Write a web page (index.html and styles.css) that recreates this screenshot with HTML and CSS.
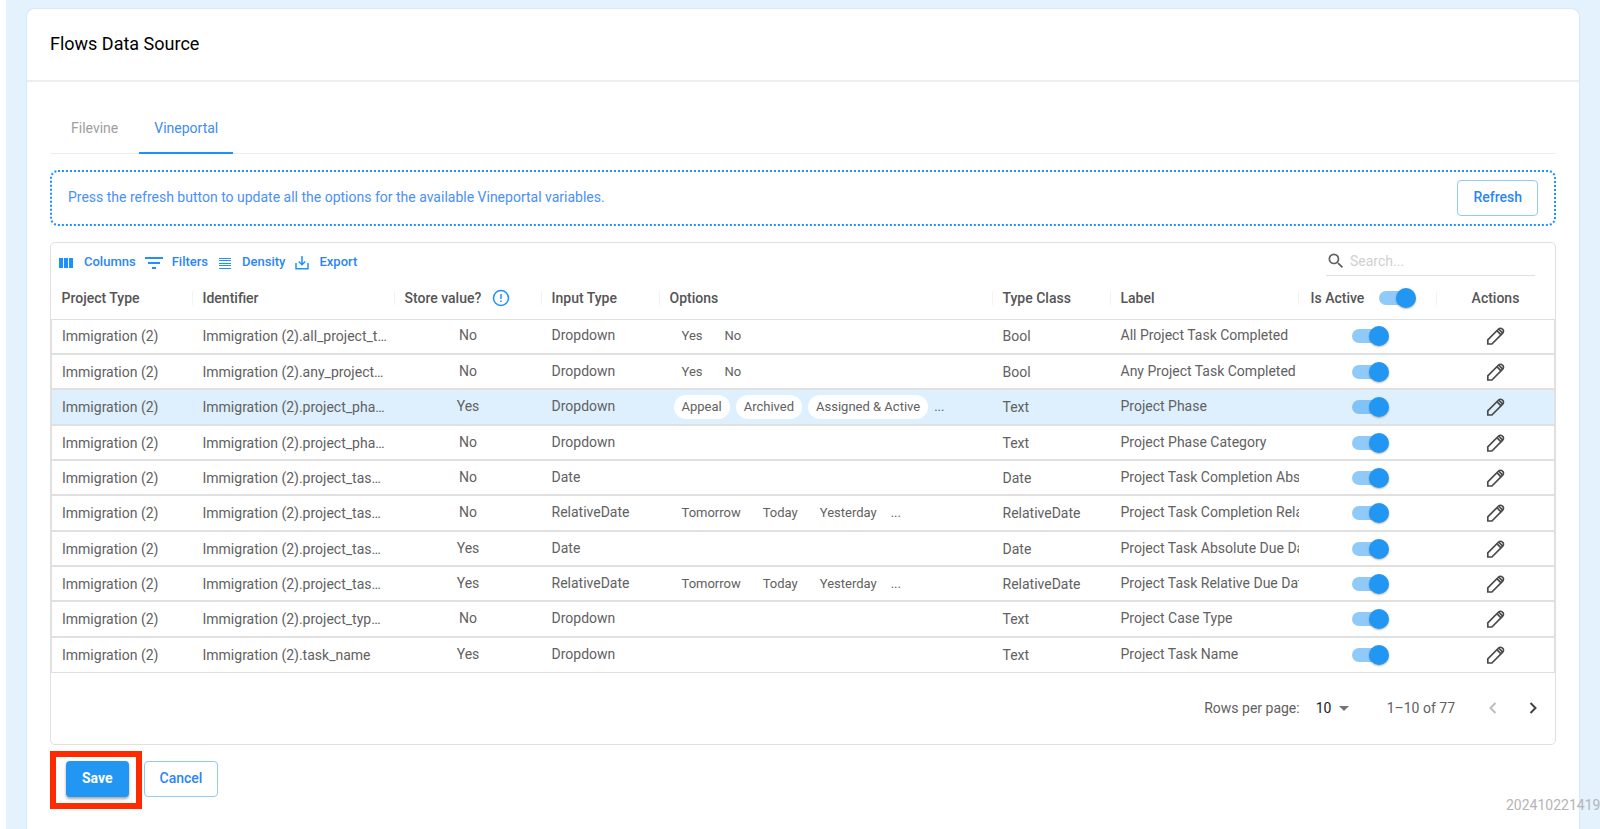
FILE: index.html
```html
<!DOCTYPE html>
<html lang="en">

<head>
    <meta charset="UTF-8">
    <meta name="viewport" content="width=device-width, initial-scale=1.0">
    <title>Flows Data Source</title>
    <link rel="stylesheet" href="styles.css">
</head>

<body>
    <div class="page">
        <main class="card">
            <header class="card-header">
                <h1>Flows Data Source</h1>
            </header>

            <div class="card-body">
                <div class="tabs" role="tablist">
                    <button type="button" class="tab" role="tab">Filevine</button>
                    <button type="button" class="tab active" role="tab" aria-selected="true">Vineportal</button>
                </div>

                <div class="notice">
                    <p>Press the refresh button to update all the options for the available Vineportal variables.</p>
                    <button type="button" class="btn btn-outline">Refresh</button>
                </div>

                <section class="grid">
                    <div class="toolbar">
                        <div class="toolbar-actions">
                            <button type="button" class="tool">
                                <svg width="20" height="20" viewBox="0 0 20 20" fill="currentColor"><path d="M3 6h4v10H3zM8 6h4v10H8zM13 6h4v10h-4z"/></svg>
                                Columns
                            </button>
                            <button type="button" class="tool">
                                <svg width="20" height="20" viewBox="0 0 20 20" fill="currentColor"><path d="M1 5h18v2H1zM4 10h12v2H4zM8 15h4v2H8z"/></svg>
                                Filters
                            </button>
                            <button type="button" class="tool">
                                <svg width="18" height="20" viewBox="1 0 18 20" fill="currentColor"><path d="M4 6h12v1H4zM4 8h12v1H4zM4 11h12v1H4zM4 13h12v1H4zM4 16h12v1H4z"/></svg>
                                Density
                            </button>
                            <button type="button" class="tool">
                                <svg width="18" height="20" viewBox="1 0 18 20" fill="none" stroke="currentColor" stroke-width="1.5"><path d="M4 11v5.700h12V11M10 4v8.500M6.800 9.500l3.200 3.200 3.200-3.200"/></svg>
                                Export
                            </button>
                        </div>
                        <label class="search">
                            <svg width="20" height="20" viewBox="0 0 24 24" fill="currentColor"><path d="M15.500 14h-.790l-.280-.270A6.471 6.471 0 0 0 16 9.500 6.500 6.500 0 1 0 9.500 16c1.610 0 3.090-.590 4.230-1.570l.270.280v.790l5 4.990L20.490 19l-4.990-5zm-6 0C7.010 14 5 11.990 5 9.500S7.010 5 9.500 5 14 7.010 14 9.500 11.990 14 9.500 14z"/></svg>
                            <input type="search" placeholder="Search..." aria-label="Search">
                        </label>
                    </div>

                    <table id="variablesTable">
                        <colgroup>
                            <col class="col-project">
                            <col class="col-identifier">
                            <col class="col-store">
                            <col class="col-input">
                            <col class="col-options">
                            <col class="col-class">
                            <col class="col-label">
                            <col class="col-active">
                            <col class="col-actions">
                        </colgroup>
                        <thead>
                            <tr>
                                <th>Project Type</th>
                                <th>Identifier</th>
                                <th>
                                    <div class="head-group">
                                        Store value?
                                        <svg width="18" height="18" viewBox="0 0 18 18" fill="none" stroke="#1e90ff" stroke-width="1.500"><circle cx="9" cy="9" r="7.500"/><path d="M9 5v5M9 11.500v1.500"/></svg>
                                    </div>
                                </th>
                                <th>Input Type</th>
                                <th>Options</th>
                                <th>Type Class</th>
                                <th>Label</th>
                                <th>
                                    <div class="head-group head-active">
                                        <label for="allActive">Is Active</label>
                                        <input type="checkbox" class="switch" id="allActive" checked>
                                    </div>
                                </th>
                                <th class="center">Actions</th>
                            </tr>
                        </thead>
                        <tbody>
                        </tbody>
                    </table>

                    <footer class="pagination">
                        <label for="pageSize">Rows per page:</label>
                        <div class="page-size">
                            <select id="pageSize">
                                <option>10</option>
                                <option>25</option>
                                <option>50</option>
                            </select>
                            <svg width="10" height="5" viewBox="0 0 10 5" fill="#757575"><path d="M0 0h10L5 5z"/></svg>
                        </div>
                        <span class="range">1–10 of 77</span>
                        <button type="button" class="page-btn" aria-label="Previous page" disabled>
                            <svg width="24" height="24" viewBox="0 0 24 24" fill="none" stroke="currentColor" stroke-width="2"><path d="M14.500 7l-5 5 5 5"/></svg>
                        </button>
                        <button type="button" class="page-btn" aria-label="Next page">
                            <svg width="24" height="24" viewBox="0 0 24 24" fill="none" stroke="currentColor" stroke-width="2"><path d="M9.500 7l5 5-5 5"/></svg>
                        </button>
                    </footer>
                </section>

                <div class="form-actions">
                    <div class="highlight">
                        <button type="button" class="btn btn-primary">Save</button>
                    </div>
                    <button type="button" class="btn btn-outline">Cancel</button>
                </div>
            </div>
        </main>
        <span class="version">202410221419</span>
    </div>

    <script src="script.js"></script>
</body>

</html>
```

FILE: styles.css
```css
* {
    box-sizing: border-box;
}

body {
    margin: 0;
    font-family: Roboto, "Liberation Sans", sans-serif;
    font-size: 14px;
    line-height: 20px;
    color: #616161;
    background-color: #fff;
}

button,
input,
select {
    font: inherit;
    color: inherit;
}

button {
    background: none;
    border: none;
    padding: 0;
    cursor: pointer;
}

svg {
    display: block;
    flex: none;
}

.page {
    position: relative;
    display: flex;
    height: 100vh;
    margin-left: 6px;
    padding: 9px 21px 0;
    background-color: #e3f2fd;
    overflow: hidden;
}

.card {
    flex: 1;
    min-width: 0;
    background: #fff;
    border-radius: 8px 8px 0 0;
    box-shadow: 0 0 1px 1px #d3e9fc;
}

.card-header {
    padding: 23px 23px 24px;
    border-bottom: 2px solid #eee;
}

.card-header h1 {
    margin: 0;
    font-size: 18px;
    font-weight: 400;
    line-height: 24px;
    color: #000;
}

.card-body {
    padding: 23px;
}

/* tabs */

.tabs {
    display: flex;
    border-bottom: 1px solid #eee;
}

.tab {
    height: 49px;
    padding: 0 15px 1px;
    margin-bottom: -1px;
    border-bottom: 2px solid transparent;
    color: #9e9e9e;
}

.tab:first-child {
    padding: 0 21px 1px;
}

.tab.active {
    color: #3d8bf5;
    border-bottom-color: #1e90ff;
}

/* refresh notice */

.notice {
    display: flex;
    align-items: center;
    justify-content: space-between;
    height: 56px;
    margin-top: 16px;
    padding: 0 16px;
    border: 2px dotted #1e90ff;
    border-radius: 8px;
}

.notice p {
    margin: 0;
    padding-bottom: 2px;
    color: #4a90f7;
}

.btn {
    height: 36px;
    padding: 0 15px 2px;
    border: 1px solid transparent;
    border-radius: 4px;
    font-weight: 500;
}

.btn-outline {
    border-color: #90caf9;
    color: #2b86f5;
}

.btn-primary {
    background: #2196f3;
    color: #fff;
    font-weight: 700;
    box-shadow: 0 2px 3px rgba(0, 0, 0, 0.35);
}

/* data grid */

.grid {
    margin-top: 16px;
    border: 1px solid #e0e0e0;
    border-radius: 5px;
}

.toolbar {
    display: flex;
    justify-content: space-between;
    padding: 3px 20px 0 5px;
}

.toolbar-actions {
    display: flex;
    align-items: center;
    gap: 8px;
    height: 32px;
}

.tool {
    display: flex;
    align-items: center;
    gap: 8px;
    font-size: 13px;
    font-weight: 500;
    color: #2b86f5;
}

.tool svg {
    color: #1e90ff;
}

.search {
    display: flex;
    align-items: center;
    gap: 4px;
    width: 209px;
    height: 30px;
    border-bottom: 1px solid #e0e0e0;
}

.search input {
    width: 100%;
    min-width: 0;
    padding: 0;
    border: none;
    outline: none;
    background: none;
}

.search input::placeholder {
    color: #d0d0d0;
}

table {
    width: 100%;
    table-layout: fixed;
    border-collapse: collapse;
}

.col-project {
    width: 141px;
}

.col-identifier {
    width: 202px;
}

.col-store {
    width: 147px;
}

.col-input,
.col-class,
.col-actions {
    width: 118px;
}

.col-label {
    width: 188px;
}

.col-active {
    width: 138px;
}

th,
td {
    padding: 0 10px;
    text-align: left;
    white-space: nowrap;
    overflow: hidden;
}

th {
    position: relative;
    height: 41px;
    padding-bottom: 1px;
    font-weight: 500;
    color: #555;
}

th:not(:last-child)::after {
    content: "";
    position: absolute;
    top: 13px;
    right: 0;
    width: 1px;
    height: 14px;
    background: #f3f3f3;
}

tbody tr {
    height: 35px;
    border: 2px solid #e0e0e0;
    border-width: 2px 1px;
}

tbody tr:nth-child(3n) {
    height: 36px;
}

tbody tr:first-child {
    border-top-width: 1px;
}

tbody tr:last-child {
    border-bottom-width: 1px;
}

tbody tr.selected {
    background: #def0fe;
}

.raised {
    padding-bottom: 2px;
}

.label-cell {
    padding-right: 0;
}

.center {
    text-align: center;
}

.active-cell {
    padding-left: 16px;
}

.head-group {
    display: flex;
    align-items: center;
    gap: 11px;
}

.head-active {
    gap: 15px;
    padding-left: 2px;
}

.chips {
    display: flex;
    align-items: center;
    gap: 6px;
    padding-left: 4px;
}

.chip {
    height: 24px;
    padding: 0 8px;
    border-radius: 12px;
    background: #fff;
    font-size: 13px;
    line-height: 24px;
}

.more {
    font-size: 13px;
}

.switch {
    appearance: none;
    position: relative;
    display: block;
    width: 37px;
    height: 20px;
    margin: 0;
    cursor: pointer;
}

.active-cell .switch {
    margin: 0 auto;
}

.switch::before {
    content: "";
    position: absolute;
    top: 3px;
    left: 0;
    width: 34px;
    height: 14px;
    border-radius: 7px;
    background: rgba(33, 150, 243, 0.5);
}

.switch::after {
    content: "";
    position: absolute;
    top: 0;
    right: 0;
    width: 20px;
    height: 20px;
    border-radius: 50%;
    background: #2196f3;
    box-shadow: 0 1px 2px rgba(0, 0, 0, 0.3);
}

.edit {
    display: block;
    margin: 0 auto;
    color: #4a4a4a;
}

.pagination {
    display: flex;
    align-items: center;
    justify-content: flex-end;
    height: 71px;
    padding-right: 10px;
}

.page-size {
    display: flex;
    align-items: center;
    gap: 7px;
    margin: 0 38px 0 16px;
}

.page-size select {
    appearance: none;
    padding: 0;
    border: none;
    background: none;
    color: #212121;
}

.range {
    margin-right: 26px;
}

.page-btn {
    margin-right: 16px;
    color: #424242;
}

.page-btn:last-child {
    margin-right: 0;
}

.page-btn:disabled {
    color: #bdbdbd;
}

/* bottom buttons */

.form-actions {
    display: flex;
    align-items: baseline;
    gap: 2px;
    margin-top: 6px;
}

.highlight {
    padding: 4px 7px 6px 10px;
    border: 6px solid #ff2a00;
}

.highlight .btn {
    display: block;
}

.version {
    position: absolute;
    left: calc(100% - 94px);
    bottom: 14px;
    color: #b5b5b5;
    white-space: nowrap;
}
```

FILE: script.js
```js
const variables = [
    { id: 'all_project_t…', store: 'No', input: 'Dropdown', options: ['Yes', 'No'], type: 'Bool', label: 'All Project Task Completed' },
    { id: 'any_project…', store: 'No', input: 'Dropdown', options: ['Yes', 'No'], type: 'Bool', label: 'Any Project Task Completed' },
    { id: 'project_pha…', store: 'Yes', input: 'Dropdown', options: ['Appeal', 'Archived', 'Assigned & Active'], more: true, type: 'Text', label: 'Project Phase', selected: true },
    { id: 'project_pha…', store: 'No', input: 'Dropdown', options: [], type: 'Text', label: 'Project Phase Category' },
    { id: 'project_tas…', store: 'No', input: 'Date', options: [], type: 'Date', label: 'Project Task Completion Absolute' },
    { id: 'project_tas…', store: 'No', input: 'RelativeDate', options: ['Tomorrow', 'Today', 'Yesterday'], more: true, type: 'RelativeDate', label: 'Project Task Completion Relative' },
    { id: 'project_tas…', store: 'Yes', input: 'Date', options: [], type: 'Date', label: 'Project Task Absolute Due Date' },
    { id: 'project_tas…', store: 'Yes', input: 'RelativeDate', options: ['Tomorrow', 'Today', 'Yesterday'], more: true, type: 'RelativeDate', label: 'Project Task Relative Due Date' },
    { id: 'project_typ…', store: 'No', input: 'Dropdown', options: [], type: 'Text', label: 'Project Case Type' },
    { id: 'task_name', store: 'Yes', input: 'Dropdown', options: [], type: 'Text', label: 'Project Task Name' }
];

const pencil = `
    <svg width="20" height="20" viewBox="0 0 20 20" fill="none" stroke="currentColor" stroke-width="1.7" stroke-linejoin="round">
        <path d="M2.800 18v-4.200L13.600 3a2.600 2.600 0 0 1 3.700 0l.400.400a2.600 2.600 0 0 1 0 3.700L6.900 18z"/>
        <path d="M11.900 4.700l4.100 4.100M13.600 3l4.100 4.100"/>
    </svg>`;

const tableBody = document.querySelector('#variablesTable tbody');

variables.forEach(item => {
    const chips = item.options.map(option => `<span class="chip">${option.replace('&', '&amp;')}</span>`).join('');
    const more = item.more ? '<span class="more">...</span>' : '';
    const row = document.createElement('tr');
    if (item.selected) {
        row.className = 'selected';
    }
    row.innerHTML = `
        <td>Immigration (2)</td>
        <td>Immigration (2).${item.id}</td>
        <td class="center raised">${item.store}</td>
        <td class="raised">${item.input}</td>
        <td><div class="chips">${chips}${more}</div></td>
        <td>${item.type}</td>
        <td class="label-cell raised">${item.label}</td>
        <td class="active-cell"><input type="checkbox" class="switch" aria-label="Is Active" checked></td>
        <td><button type="button" class="edit" aria-label="Edit">${pencil}</button></td>
    `;
    tableBody.appendChild(row);
});
```
